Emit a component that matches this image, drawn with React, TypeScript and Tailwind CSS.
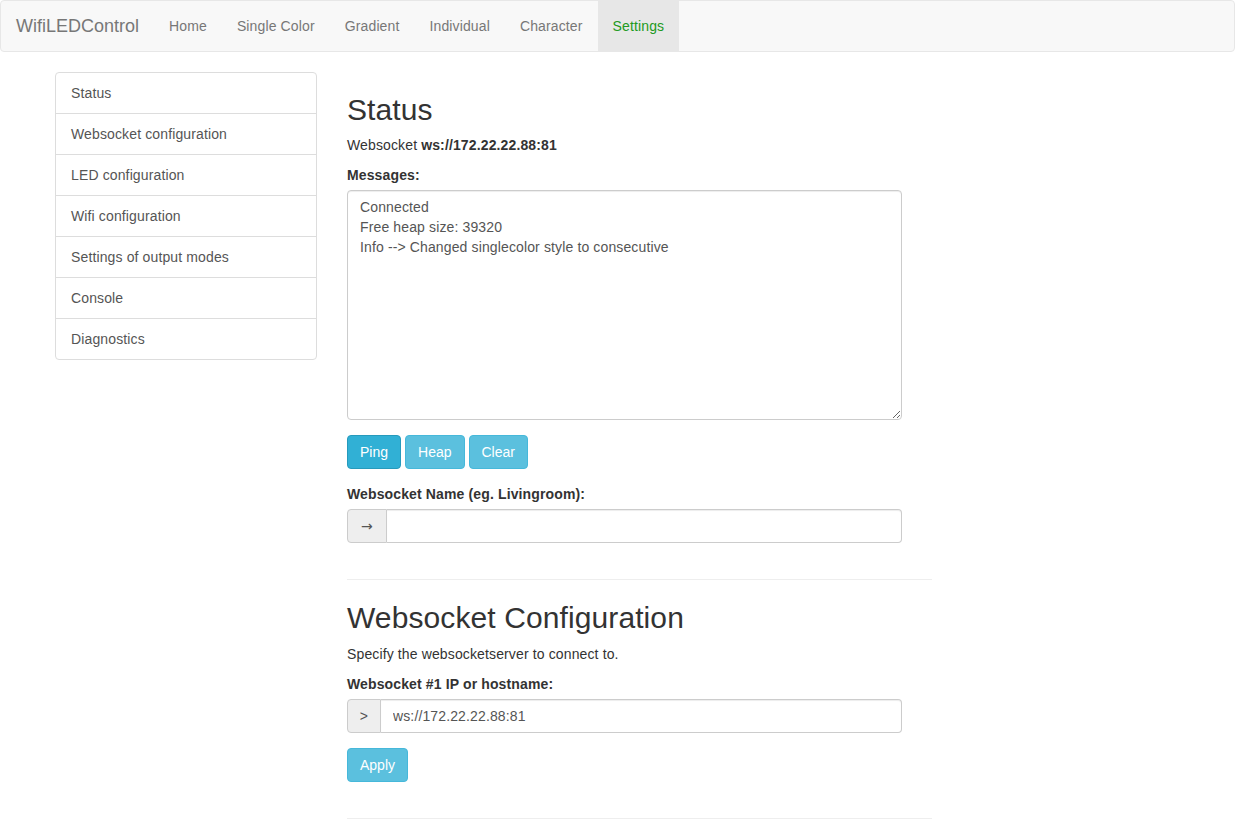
import React, { useState } from "react";

const navItems = ["Home", "Single Color", "Gradient", "Individual", "Character", "Settings"];

const sideItems = [
  "Status",
  "Websocket configuration",
  "LED configuration",
  "Wifi configuration",
  "Settings of output modes",
  "Console",
  "Diagnostics",
];

const Heading = ({ children, top }: { children: React.ReactNode; top?: boolean }) => (
  <h2
    className={
      top
        ? "mt-[21px] mb-[9px] text-[30px] leading-[33px] font-medium tracking-[0.1px] text-[#333]"
        : "mt-[21px] mb-[10px] text-[30px] leading-[33px] font-medium tracking-[0.1px] text-[#333]"
    }
  >
    {children}
  </h2>
);

const Label = ({ children }: { children: React.ReactNode }) => (
  <label className="block mb-[5px] font-bold">{children}</label>
);

const InfoButton = ({ children, active }: { children: React.ReactNode; active?: boolean }) => (
  <button
    className={
      active
        ? "px-[12px] py-[6px] leading-[20px] tracking-normal text-white rounded-[4px] border border-[#269abc] bg-[#31b0d5]"
        : "px-[12px] py-[6px] leading-[20px] tracking-normal text-white rounded-[4px] border border-[#46b8da] bg-[#5bc0de]"
    }
  >
    {children}
  </button>
);

const InputGroup = ({ addon, value, arrow }: { addon: string; value?: string; arrow?: boolean }) => {
  const [v, setV] = useState(value ?? "");
  return (
    <div className="flex w-[555px] h-[34px]">
      <span
        className={
          arrow
            ? "flex items-center justify-center w-[40px] bg-[#eee] border border-[#ccc] rounded-l-[4px] text-[#555] font-['DejaVu_Sans',sans-serif]"
            : "flex items-center justify-center w-[34px] bg-[#eee] border border-[#ccc] rounded-l-[4px] text-[#555]"
        }
      >
        {addon}
      </span>
      <input
        className="flex-1 min-w-0 px-[12px] border border-l-0 border-[#ccc] rounded-r-[4px] text-[#555] shadow-[inset_0_1px_1px_rgba(0,0,0,0.075)] outline-none"
        value={v}
        onChange={(e) => setV(e.target.value)}
      />
    </div>
  );
};

const Hr = () => <hr className="mt-[36px] mb-[20px] w-[585px] border-0 border-t border-[#eee]" />;

export default function App() {
  return (
    <div className="min-h-screen bg-white font-['Liberation_Sans',Arial,sans-serif] text-[14px] leading-[20px] tracking-[0.13px] text-[#333]">
      <nav className="flex h-[52px] mb-[20px] border border-[#e7e7e7] bg-[#f8f8f8] rounded-[4px]">
        <span className="px-[15px] py-[15px] text-[18px] leading-[20px] tracking-normal text-[#777]">WifiLEDControl</span>
        {navItems.map((item) => (
          <a
            key={item}
            className={
              item === "Settings"
                ? "px-[15px] py-[15px] leading-[20px] bg-[#e7e7e7] text-[#229a22]"
                : "px-[15px] py-[15px] leading-[20px] text-[#777]"
            }
          >
            {item}
          </a>
        ))}
      </nav>

      <div className="flex pl-[55px]">
        <div className="w-[262px] shrink-0 self-start border border-[#ddd] rounded-[4px]">
          {sideItems.map((item, i) => (
            <a
              key={item}
              className={
                i === sideItems.length - 1
                  ? "block px-[15px] py-[10px] text-[#555]"
                  : "block px-[15px] py-[10px] text-[#555] border-b border-[#ddd]"
              }
            >
              {item}
            </a>
          ))}
        </div>

        <div className="ml-[30px] w-[585px]">
          <section>
            <Heading top>Status</Heading>
            <p className="mb-[10px]">
              Websocket <b>ws://172.22.22.88:81</b>
            </p>
            <Label>Messages:</Label>
            <textarea
              readOnly
              className="block w-[555px] h-[230px] px-[12px] py-[6px] border border-[#ccc] rounded-[4px] text-[#555] leading-[20px] shadow-[inset_0_1px_1px_rgba(0,0,0,0.075)] outline-none"
              value={"Connected\nFree heap size: 39320\nInfo --> Changed singlecolor style to consecutive"}
            />
            <div className="flex gap-[4px] mt-[15px] mb-[15px]">
              <InfoButton active>Ping</InfoButton>
              <InfoButton>Heap</InfoButton>
              <InfoButton>Clear</InfoButton>
            </div>
            <div>
              <Label>Websocket Name (eg. Livingroom):</Label>
              <InputGroup addon="→" arrow />
            </div>
          </section>

          <Hr />

          <section>
            <Heading>Websocket Configuration</Heading>
            <p className="mb-[10px]">Specify the websocketserver to connect to.</p>
            <Label>Websocket #1 IP or hostname:</Label>
            <InputGroup addon=">" value="ws://172.22.22.88:81" />
            <div className="mt-[15px]">
              <InfoButton>Apply</InfoButton>
            </div>
          </section>

          <Hr />
        </div>
      </div>
    </div>
  );
}
